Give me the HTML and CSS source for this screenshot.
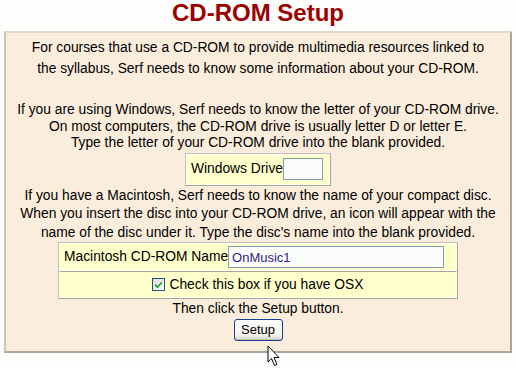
FILE: index.html
```html
<!DOCTYPE html>
<html>

<head>
  <meta name="viewport" content="width=device-width,initial-scale=1">
  <link rel="stylesheet" href="styles.css">
</head>

<body>
  <h2 class="title">CD-ROM Setup</h2>

  <div class="setup">
    <p class="intro">For courses that use a CD-ROM to provide multimedia resources linked to<br>
      the syllabus, Serf needs to know some information about your CD-ROM.</p>

    <p class="windows">If you are using Windows, Serf needs to know the letter of your CD-ROM drive.<br>
      On most computers, the CD-ROM drive is usually letter D or letter E.<br>
      Type the letter of your CD-ROM drive into the blank provided.</p>

    <table class="field win">
      <tr>
        <td>Windows Drive<input type="text" class="drive"></td>
      </tr>
    </table>

    <p class="macintosh">If you have a Macintosh, Serf needs to know the name of your compact disc.<br>
      When you insert the disc into your CD-ROM drive, an icon will appear with the<br>
      name of the disc under it. Type the disc's name into the blank provided.</p>

    <table class="field mac">
      <tr>
        <td class="left">Macintosh CD-ROM Name<input type="text" class="discname" value="OnMusic1"></td>
      </tr>
      <tr>
        <td class="center"><span class="check"><svg width="13" height="13" viewBox="0 0 13 13">
              <defs>
                <linearGradient id="cb" x1="0" y1="0" x2="1" y2="1">
                  <stop offset="0" stop-color="#dcdcd6" />
                  <stop offset="1" stop-color="#ffffff" />
                </linearGradient>
              </defs>
              <rect x="0.5" y="0.5" width="12" height="12" fill="url(#cb)" stroke="#1c5180" />
              <path d="M3 5.6 L5.3 7.9 L10 3.2 L10 5.6 L5.3 10.3 L3 8 Z" fill="#21a121" />
            </svg></span>Check this box if you have OSX</td>
      </tr>
    </table>

    <p class="last">Then click the Setup button.</p>
    <button class="btn">Setup</button>
  </div>

  <!-- mouse pointer -->
  <svg class="cursor" width="14" height="23" viewBox="0 0 14 23">
    <path d="M1 1 L1 17 L4.5 13.5 L7.5 20.5 L10 19.5 L7 12.5 L12 12.5 Z" fill="#fff" stroke="#000" stroke-width="1" />
  </svg>
</body>

</html>
```

FILE: styles.css
```css
/* Page */

html,
body {
  background-color: #fdfefb;
}

body {
  margin: 0;
  padding: 0 4px;
  min-height: 368px;
  box-sizing: border-box;
  font-family: "Liberation Sans", Arial, sans-serif;
  font-size: 13.8px;
  color: #000;
  position: relative;
}

.title {
  margin: 0;
  height: 31px;
  line-height: 25px;
  text-align: center;
  font-size: 24px;
  font-weight: bold;
  color: #9c0000;
}

/* Outer box */

.setup {
  width: 508px;
  box-sizing: border-box;
  background-color: #fbeddc;
  border: 2px solid;
  border-color: #dedbd2 #a9a79c #a9a79c #c9c6bb;
  text-align: center;
  padding: 4px 0 10px;
  line-height: 18.5px;
}

.setup p {
  margin: 0;
  white-space: nowrap;
}

.setup p.intro {
  line-height: 21px;
  margin-bottom: 23px;
}

.setup p.windows {
  line-height: 16.5px;
  margin-bottom: 1px;
}

.setup p.macintosh {
  margin-top: 1px;
}

.setup p.last {
  margin-top: 1px;
}

/* Small yellow tables */

.field {
  margin: 0 auto;
  border-collapse: separate;
  border-spacing: 0;
  background-color: #ffffcc;
  border: 1px solid;
  border-color: #c4c2b8 #a9a79c #a9a79c #c4c2b8;
  font-size: 13.8px;
  line-height: 18px;
}

.field td {
  border: 1px solid;
  border-color: #a9a79c #fffff4 #fffff4 #fffff4;
  padding: 2px 4px;
  white-space: nowrap;
}

.field tr:first-child td {
  border-top-color: #fffff4;
}

.win td {
  padding: 3px 6px 4px 4px;
}

.mac {
  width: 400px;
}

.mac td.left {
  text-align: left;
}

.mac td.center {
  height: 21px;
  padding-left: 0;
  padding-right: 0;
}

input[type=text] {
  box-sizing: border-box;
  height: 22px;
  margin: 0;
  border: 1px solid #7f9db9;
  background-color: #fbfdfa;
  font-family: "Liberation Sans", Arial, sans-serif;
  font-size: 13px;
  color: #3a1a8a;
  padding: 2px 3px;
  vertical-align: middle;
}

.drive {
  width: 40px;
}

.discname {
  width: 216px;
  margin-left: 1px;
}

.check {
  display: inline-block;
  vertical-align: -2px;
  margin-right: 4px;
}

.check svg {
  display: block;
}

/* Button */

.btn {
  display: block;
  margin: 0 auto;
  height: 22px;
  width: 49px;
  padding: 0;
  font-family: "Liberation Sans", Arial, sans-serif;
  font-size: 13px;
  color: #000;
  border: 1px solid #1a3e8a;
  border-radius: 3px;
  background: linear-gradient(#ffffff, #f3f2ec 75%, #d6d2c6);
  box-shadow: inset 0 -1px 0 #c7c3b5;
}

.cursor {
  position: absolute;
  left: 267px;
  top: 345px;
}
```
